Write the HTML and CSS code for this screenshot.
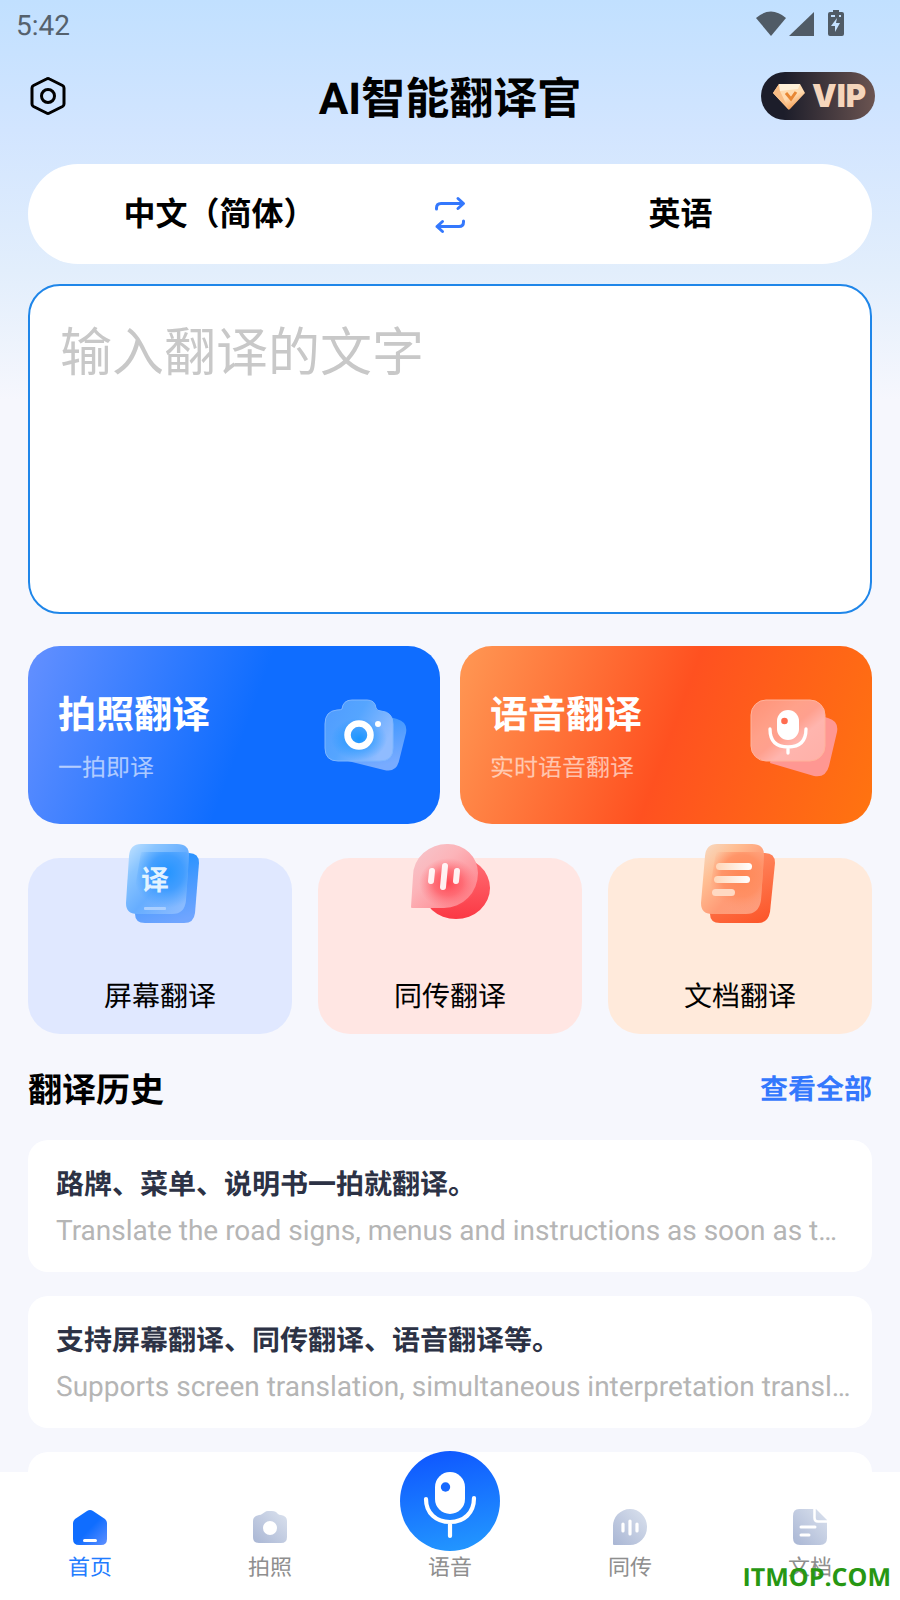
FILE: index.html
```html
<!DOCTYPE html>
<html lang="zh-CN">
<head>
<meta charset="utf-8">
<meta name="viewport" content="width=device-width, initial-scale=1">
<title>AI智能翻译官</title>
<link rel="stylesheet" href="styles.css">
</head>
<body>
<div class="app">
  <div class="status">
    <span>5:42</span>
    <svg class="status-icons" width="88" height="26" viewBox="0 0 88 26" fill="#505b66" aria-hidden="true">
      <path d="M0 8Q15-5 30 8L15 26Z"/>
      <path d="M33 26L58 2V26Z"/>
      <path fill-rule="evenodd" d="M77 0h6v2h3q2 0 2 2v20q0 2-2 2H74q-2 0-2-2V4q0-2 2-2h3zM75 5v2h4V5zM83 5v2h2V5zM81 8l-6 8h4v6l5-9h-4z"/>
    </svg>
  </div>

  <header class="header">
    <button class="icon-button" type="button" aria-label="设置">
      <svg width="36" height="38" viewBox="0 0 36 38" fill="none" stroke="#000" stroke-width="3" stroke-linejoin="round" aria-hidden="true">
        <path d="M16.500 2Q18 1.200 19.500 2L32.500 8.500Q34 9.300 34 11V27Q34 28.700 32.500 29.500L19.500 36Q18 36.800 16.500 36L3.500 29.500Q2 28.700 2 27V11Q2 9.300 3.500 8.500Z"/>
        <circle cx="18" cy="19" r="6.500"/>
      </svg>
    </button>
    <h1 class="title">AI智能翻译官</h1>
    <button class="vip" type="button">
      <svg width="32" height="27" viewBox="0 0 32 27" aria-hidden="true">
        <defs>
          <linearGradient id="gem" x1="0" y1="0" x2="0.600" y2="1"><stop offset="0" stop-color="#ffd9ac"/><stop offset="0.600" stop-color="#ffddb4"/><stop offset="1" stop-color="#f59a4d"/></linearGradient>
        </defs>
        <path d="M6 1H27L32 10L17 26Q16 27 15 26L0 10Z" fill="url(#gem)"/>
        <path d="M6 1L7 8L0 10ZM7 8L16 27L0 10Z" fill="#f9bd85"/>
        <path d="M6 1H27L25 6L7 8Z" fill="#fff0d8"/>
        <path d="M13 10L18 16L23 9" fill="none" stroke="#e88734" stroke-width="3"/>
      </svg>
      <span>VIP</span>
    </button>
  </header>

  <main class="main">
    <div class="languages">
      <button class="language" type="button">中文（简体）</button>
      <button class="swap" type="button" aria-label="交换语言">
        <svg width="30" height="36" viewBox="0 0 30 36" fill="none" stroke="#3478fd" stroke-width="3" stroke-linecap="round" stroke-linejoin="round" aria-hidden="true">
          <path d="M1.500 12V11Q1.500 6.500 6 6.500H28M23 1.500L28.500 6.500L23 11.500M28.500 24V25Q28.500 29.500 24 29.500H2M7.500 24.500L2 29.500L7.500 34.500"/>
        </svg>
      </button>
      <button class="language" type="button">英语</button>
    </div>

    <textarea class="source" aria-label="输入翻译的文字" placeholder="输入翻译的文字"></textarea>

    <div class="features">
      <a class="feature feature-photo" href="#photo">
        <span class="feature-text"><strong>拍照翻译</strong><small>一拍即译</small></span>
        <svg width="84" height="74" viewBox="0 0 84 74" aria-hidden="true">
          <defs>
            <linearGradient id="camBack" x1="0" y1="0" x2="0.300" y2="1"><stop offset="0" stop-color="#2f91ff"/><stop offset="1" stop-color="#78abff"/></linearGradient>
            <linearGradient id="camFront" x1="0" y1="0" x2="1" y2="0.500"><stop offset="0" stop-color="#4f9bff"/><stop offset="0.500" stop-color="#55a5ff"/><stop offset="1" stop-color="#90bcff"/></linearGradient>
            <radialGradient id="camGlow"><stop offset="0" stop-color="#1c96ff"/><stop offset="1" stop-color="#1c96ff" stop-opacity="0"/></radialGradient>
          </defs>
          <path d="M66 18L73 20Q84 23 82 34L75 62Q72 74 60 71L20 61L30 20Z" fill="url(#camBack)"/>
          <path d="M18 10Q19 1 28 1H43Q51 1 52 9Q53 12 57 12Q69 13 69 25V49Q69 62 56 62H14Q1 62 1 49V25Q1 12 13 11Q17 11 18 10Z" fill="url(#camFront)" stroke="#7fb7ff"/>
          <ellipse cx="35" cy="40" rx="28" ry="21" fill="url(#camGlow)"/>
          <circle cx="35" cy="36" r="11.500" fill="none" stroke="#fff" stroke-width="6.500"/>
          <circle cx="54" cy="25" r="3" fill="#fff"/>
        </svg>
      </a>
      <a class="feature feature-voice" href="#voice">
        <span class="feature-text"><strong>语音翻译</strong><small>实时语音翻译</small></span>
        <svg width="88" height="74" viewBox="0 0 88 74" aria-hidden="true">
          <defs>
            <linearGradient id="micFront" x1="0" y1="0" x2="1" y2="1"><stop offset="0" stop-color="#ff9277"/><stop offset="0.350" stop-color="#ffa18a"/><stop offset="0.500" stop-color="#ffa08e"/><stop offset="0.650" stop-color="#ffb5ae"/><stop offset="1" stop-color="#ffb0a8"/></linearGradient>
          </defs>
          <path d="M71 17L78 19Q89 22 87 33L79 67Q76 79 64 77L20 64L30 20Z" fill="#ff9792"/>
          <rect x="1" y="1" width="74" height="61" rx="15" fill="url(#micFront)" stroke="#ffb39c"/>
          <rect x="27" y="11" width="22" height="30" rx="11" fill="#fff"/>
          <circle cx="34.500" cy="22" r="3.300" fill="#ff6c50"/>
          <path d="M20 30Q20 48 38 48Q56 48 56 30M38 48V54" fill="none" stroke="#fff" stroke-width="3.300" stroke-linecap="round"/>
        </svg>
      </a>
    </div>

    <div class="tiles">
      <a class="tile tile-screen" href="#screen">
        <svg class="tile-icon" width="74" height="80" viewBox="0 0 74 80" aria-hidden="true">
          <defs>
            <linearGradient id="scrBack" x1="0.300" y1="0" x2="0.600" y2="1"><stop offset="0" stop-color="#1d8fff"/><stop offset="1" stop-color="#70a5ff"/></linearGradient>
            <linearGradient id="scrFront" x1="0" y1="0" x2="1" y2="1"><stop offset="0" stop-color="#c5e4ff"/><stop offset="0.250" stop-color="#8ac5ff"/><stop offset="0.550" stop-color="#66adff"/><stop offset="1" stop-color="#94bfff"/></linearGradient>
            <radialGradient id="scrGlow" cx="0.600" cy="0.350" r="0.600"><stop offset="0" stop-color="#2495ff"/><stop offset="0.500" stop-color="#3598ff" stop-opacity="0.800"/><stop offset="1" stop-color="#459fff" stop-opacity="0"/></radialGradient>
          </defs>
          <path d="M23 9H63Q73 9 73 19L69 69Q68 79 58 79H19Q9 79 9 70Z" fill="url(#scrBack)"/>
          <path d="M15 0H51Q63 0 63 11L60 56Q59 70 46 70H11Q0 70 0 59L3 12Q4 0 15 0Z" fill="url(#scrFront)"/>
          <path d="M15 8H60Q63 10 63 12L60 56Q59 66 48 67H14Q7 66 7 56Z" fill="url(#scrGlow)"/>
          <text class="tile-glyph" x="15" y="46">译</text>
          <rect x="18" y="63" width="22" height="3" rx="1" fill="#aacfff"/>
        </svg>
        <span>屏幕翻译</span>
      </a>
      <a class="tile tile-live" href="#live">
        <svg class="tile-icon" width="80" height="80" viewBox="0 0 80 80" aria-hidden="true">
          <defs>
            <linearGradient id="liveBack" x1="0" y1="0" x2="0" y2="1"><stop offset="0" stop-color="#ff7076"/><stop offset="1" stop-color="#fb3844"/></linearGradient>
            <linearGradient id="liveFront" x1="0" y1="0" x2="1" y2="1"><stop offset="0" stop-color="#f5c8ce"/><stop offset="0.400" stop-color="#fcb4b9"/><stop offset="1" stop-color="#ff7780"/></linearGradient>
            <radialGradient id="liveGlow"><stop offset="0" stop-color="#ff4652"/><stop offset="0.500" stop-color="#ff606a" stop-opacity="0.800"/><stop offset="1" stop-color="#ff7780" stop-opacity="0"/></radialGradient>
          </defs>
          <path d="M46 13A34 31 0 1 1 46 75A34 31 0 0 1 46 13Z" fill="url(#liveBack)"/>
          <path d="M2 64Q1 64 1 63L3 32A34 32 0 0 1 38 0A30 29 0 0 1 68 29A34 35 0 0 1 34 64Z" fill="url(#liveFront)"/>
          <ellipse cx="38" cy="39" rx="29" ry="25" fill="url(#liveGlow)"/>
          <path d="M22 27L21 37M35 22L33 43M47 27L46 37" fill="none" stroke="#fff" stroke-opacity="0.900" stroke-width="6" stroke-linecap="round"/>
        </svg>
        <span>同传翻译</span>
      </a>
      <a class="tile tile-doc" href="#document">
        <svg class="tile-icon" width="74" height="80" viewBox="0 0 74 80" aria-hidden="true">
          <defs>
            <linearGradient id="docBack" x1="0.500" y1="0" x2="0.900" y2="1"><stop offset="0" stop-color="#ff8b63"/><stop offset="1" stop-color="#fc5427"/></linearGradient>
            <linearGradient id="docFront" x1="0" y1="0" x2="1" y2="1"><stop offset="0" stop-color="#f6ddc7"/><stop offset="0.300" stop-color="#ffbe93"/><stop offset="0.600" stop-color="#ff9b76"/><stop offset="1" stop-color="#fc9c7d"/></linearGradient>
            <radialGradient id="docGlow" cx="0.600" cy="0.400" r="0.600"><stop offset="0" stop-color="#ff8856"/><stop offset="0.600" stop-color="#ff8d60" stop-opacity="0.800"/><stop offset="1" stop-color="#ff9b76" stop-opacity="0"/></radialGradient>
            <linearGradient id="docLine"><stop offset="0" stop-color="#ffd6b8"/><stop offset="1" stop-color="#fff"/></linearGradient>
          </defs>
          <path d="M23 9H64Q74 9 74 19L69 68Q67 79 57 79H19Q9 79 9 70Z" fill="url(#docBack)"/>
          <path d="M16 0H51Q63 0 63 11L60 56Q58 70 45 70H11Q0 70 0 59L4 12Q5 0 16 0Z" fill="url(#docFront)"/>
          <path d="M15 8H60Q63 10 63 12L60 56Q59 66 48 67H14Q7 66 7 56Z" fill="url(#docGlow)"/>
          <rect x="15" y="19" width="36" height="7" rx="3.500" fill="url(#docLine)"/>
          <rect x="13" y="32" width="36" height="7" rx="3.500" fill="url(#docLine)"/>
          <rect x="11" y="45" width="23" height="7" rx="3.500" fill="#ffd9c3"/>
        </svg>
        <span>文档翻译</span>
      </a>
    </div>

    <div class="section-head">
      <h2>翻译历史</h2>
      <a href="#history">查看全部</a>
    </div>

    <ul class="history">
      <li class="entry"><p class="entry-source">路牌、菜单、说明书一拍就翻译。</p><p class="entry-result">Translate the road signs, menus and instructions as soon as t…</p></li>
      <li class="entry"><p class="entry-source">支持屏幕翻译、同传翻译、语音翻译等。</p><p class="entry-result">Supports screen translation, simultaneous interpretation transl…</p></li>
      <li class="entry"></li>
    </ul>
  </main>

  <nav class="tabs">
    <a class="tab tab-active" href="#home">
      <svg width="36" height="36" viewBox="0 0 36 36" aria-hidden="true">
        <defs><linearGradient id="home" x1="0.300" y1="0.300" x2="1" y2="1"><stop offset="0.300" stop-color="#0f6dff"/><stop offset="1" stop-color="#6090ff"/></linearGradient></defs>
        <path d="M15 1Q18 -1 21 1L33 9Q35 11 35 13V29Q35 35 29 35H7Q1 35 1 29V13Q1 11 3 9Z" fill="url(#home)"/>
        <rect x="11" y="29" width="14" height="3" rx="1.500" fill="#fff"/>
      </svg>
      <span>首页</span>
    </a>
    <a class="tab" href="#photo">
      <svg width="36" height="36" viewBox="0 0 36 36" aria-hidden="true">
        <defs><linearGradient id="mute" x1="0" y1="1" x2="1" y2="0"><stop offset="0" stop-color="#a9b6d4"/><stop offset="1" stop-color="#dbe2ee"/></linearGradient></defs>
        <path d="M13 2Q14 1 16 1H20Q22 1 24 2L26 4Q27 5 29 5Q35 6 35 11V27Q35 33 29 33H7Q1 33 1 27V11Q1 6 7 5Q9 5 10 4Z" fill="url(#mute)"/>
        <circle cx="18" cy="18" r="7" fill="#fff"/>
      </svg>
      <span>拍照</span>
    </a>
    <a class="tab" href="#voice">
      <svg class="tab-mic" width="100" height="100" viewBox="0 0 100 100" aria-hidden="true">
        <defs><linearGradient id="voice" x1="0.400" y1="0" x2="0.600" y2="1"><stop offset="0" stop-color="#0f58ff"/><stop offset="1" stop-color="#2296ff"/></linearGradient></defs>
        <circle cx="50" cy="50" r="50" fill="url(#voice)"/>
        <rect x="35" y="21" width="30" height="42" rx="15" fill="#fff"/>
        <circle cx="45.500" cy="36" r="4.700" fill="#1769ff"/>
        <path d="M26 48C26 62 36 71 50 71S74 62 74 47M50 71V85" fill="none" stroke="#fff" stroke-width="4.200" stroke-linecap="round"/>
      </svg>
      <span>语音</span>
    </a>
    <a class="tab" href="#live">
      <svg width="36" height="36" viewBox="0 0 36 36" aria-hidden="true">
        <path d="M2 35Q1 35 1 34V17A17 17 0 0 1 18 -1A17 18 0 0 1 18 35Z" fill="url(#mute)"/>
        <path d="M11 14V21M18 11V24M25 14V21" stroke="#fff" stroke-width="3.200" stroke-linecap="round"/>
      </svg>
      <span>同传</span>
    </a>
    <a class="tab" href="#document">
      <svg width="36" height="36" viewBox="0 0 36 36" aria-hidden="true">
        <path d="M7 -1H24L35 10V28Q35 35 28 35H8Q1 35 1 28V6Q1 -1 7 -1Z" fill="url(#mute)"/>
        <path d="M22.500 -1V8Q22.500 11.500 26 11.500H35" fill="none" stroke="#fff" stroke-width="2.500"/>
        <path d="M9 17H23M9 25H17" stroke="#fff" stroke-width="3" stroke-linecap="round"/>
      </svg>
      <span>文档</span>
    </a>
  </nav>
  <div class="watermark">ITMOP.COM</div>
</div>
</body>
</html>
```
FILE: styles.css
```css
*, *::before, *::after { box-sizing: border-box; }
body {
  margin: 0;
  font-family: Roboto, "Noto Sans CJK SC", sans-serif;
  color: #000;
  text-rendering: geometricPrecision;
}
h1, h2, p, ul { margin: 0; padding: 0; }
a { color: inherit; text-decoration: none; }
button { font: inherit; color: inherit; border: 0; padding: 0; background: none; cursor: pointer; }
svg { display: block; overflow: visible; flex: none; }

.app {
  position: relative;
  display: flex;
  flex-direction: column;
  height: 100vh;
  background: linear-gradient(#c1e0ff 0, #d2e5ff 130px, #e2eefc 270px, #f6f7fd 400px);
}
.status {
  flex: none;
  display: flex;
  justify-content: space-between;
  align-items: flex-start;
  padding: 10px 56px 0 16px;
  height: 50px;
  font-size: 28px;
  line-height: 32px;
  color: #55616d;
}

.header {
  flex: none;
  display: grid;
  grid-template-columns: 1fr auto 1fr;
  align-items: center;
  height: 92px;
  padding: 0 25px;
}
.icon-button { justify-self: start; padding-left: 5px; }
.title { padding-top: 6px; font-size: 44px; line-height: 60px; font-weight: 700; }
.vip {
  justify-self: end;
  display: flex;
  align-items: center;
  gap: 7px;
  height: 48px;
  padding: 0 9px 0 12px;
  border-radius: 24px;
  background: linear-gradient(90deg, #1c1d2a 20%, #6b5451);
  color: #f5d5bb;
  font: 900 31px/48px Inter, sans-serif;
}

.main {
  flex: 1;
  min-height: 0;
  overflow: hidden;
  padding: 22px 28px 0;
}
.languages {
  display: grid;
  grid-template-columns: 1fr 78px 1fr;
  align-items: center;
  height: 100px;
  border-radius: 50px;
  background: #fff;
}
.language { height: 100%; padding-bottom: 6px; font-size: 32px; font-weight: 700; }
.swap { display: grid; place-items: center; height: 100%; padding-top: 2px; }

.source {
  display: block;
  width: 100%;
  height: 330px;
  margin-top: 20px;
  padding: 30px;
  border: 2px solid #1f86e9;
  border-radius: 32px;
  background: #fff;
  font: 52px/76px Roboto, "Noto Sans CJK SC", sans-serif;
  resize: none;
  outline: none;
}
.source::placeholder { color: #c8c8c8; opacity: 1; }

.features {
  display: grid;
  grid-template-columns: 1fr 1fr;
  gap: 20px;
  margin-top: 32px;
}
.feature {
  display: flex;
  justify-content: space-between;
  align-items: center;
  height: 178px;
  padding: 2px 32px 0 30px;
  border-radius: 32px;
  color: #fff;
}
.feature-voice { padding-right: 34px; }
.feature-photo { background: linear-gradient(110deg, #6490ff 0, #0f6dff 52%); }
.feature-voice { background: linear-gradient(110deg, #ff9854 0, #ff5120 51%, #ff7410); }
.feature-text { display: flex; flex-direction: column; gap: 6px; padding-top: 2px; }
.feature strong { font-size: 38px; line-height: 56px; font-weight: 700; }
.feature small { font-size: 24px; line-height: 36px; opacity: 0.6; }

.tiles {
  display: grid;
  grid-template-columns: repeat(3, 1fr);
  gap: 26px;
  margin-top: 34px;
}
.tile {
  position: relative;
  display: flex;
  flex-direction: column;
  justify-content: flex-end;
  align-items: center;
  height: 176px;
  padding-bottom: 17px;
  border-radius: 32px;
  font-size: 28px;
  line-height: 40px;
}
.tile-icon { position: absolute; top: -14px; left: 50%; margin-left: -34px; }
.tile-live .tile-icon { margin-left: -40px; }
.tile-doc .tile-icon { margin-left: -39px; }
.tile-glyph { font-size: 28px; font-weight: 700; fill: #e2f3ff; }
.tile-screen { background: #e0e8ff; }
.tile-live { background: #ffe6e3; }
.tile-doc { background: #ffeadb; }

.section-head {
  display: flex;
  justify-content: space-between;
  align-items: center;
  height: 106px;
}
.section-head h2 { font-size: 34px; font-weight: 700; }
.section-head a { padding-top: 2px; font-size: 28px; font-weight: 700; color: #3478fd; }

.history { display: flex; flex-direction: column; gap: 24px; list-style: none; }
.entry {
  flex: none;
  height: 132px;
  padding: 24px 20px 0 28px;
  border-radius: 20px;
  background: #fff;
  font-size: 28px;
}
.entry-source { line-height: 42px; font-weight: 700; color: #2c3245; }
.entry-result { margin-top: 8px; line-height: 34px; color: #b5b5b5; white-space: nowrap; overflow: hidden; }

.tabs {
  position: relative;
  flex: none;
  display: grid;
  grid-template-columns: repeat(5, 1fr);
  height: 128px;
  background: #fff;
  font-size: 22px;
  line-height: 32px;
  color: #8e8e8e;
}
.tab {
  position: relative;
  display: flex;
  flex-direction: column;
  justify-content: flex-end;
  align-items: center;
  gap: 7px;
  padding-bottom: 15px;
}
.tab-active { color: #1f7cff; }
.tab-mic { position: absolute; top: -21px; }
.watermark {
  position: absolute;
  right: 9px;
  bottom: 6px;
  font: 700 25px/34px "Open Sans", sans-serif;
  color: #279713;
}
```
